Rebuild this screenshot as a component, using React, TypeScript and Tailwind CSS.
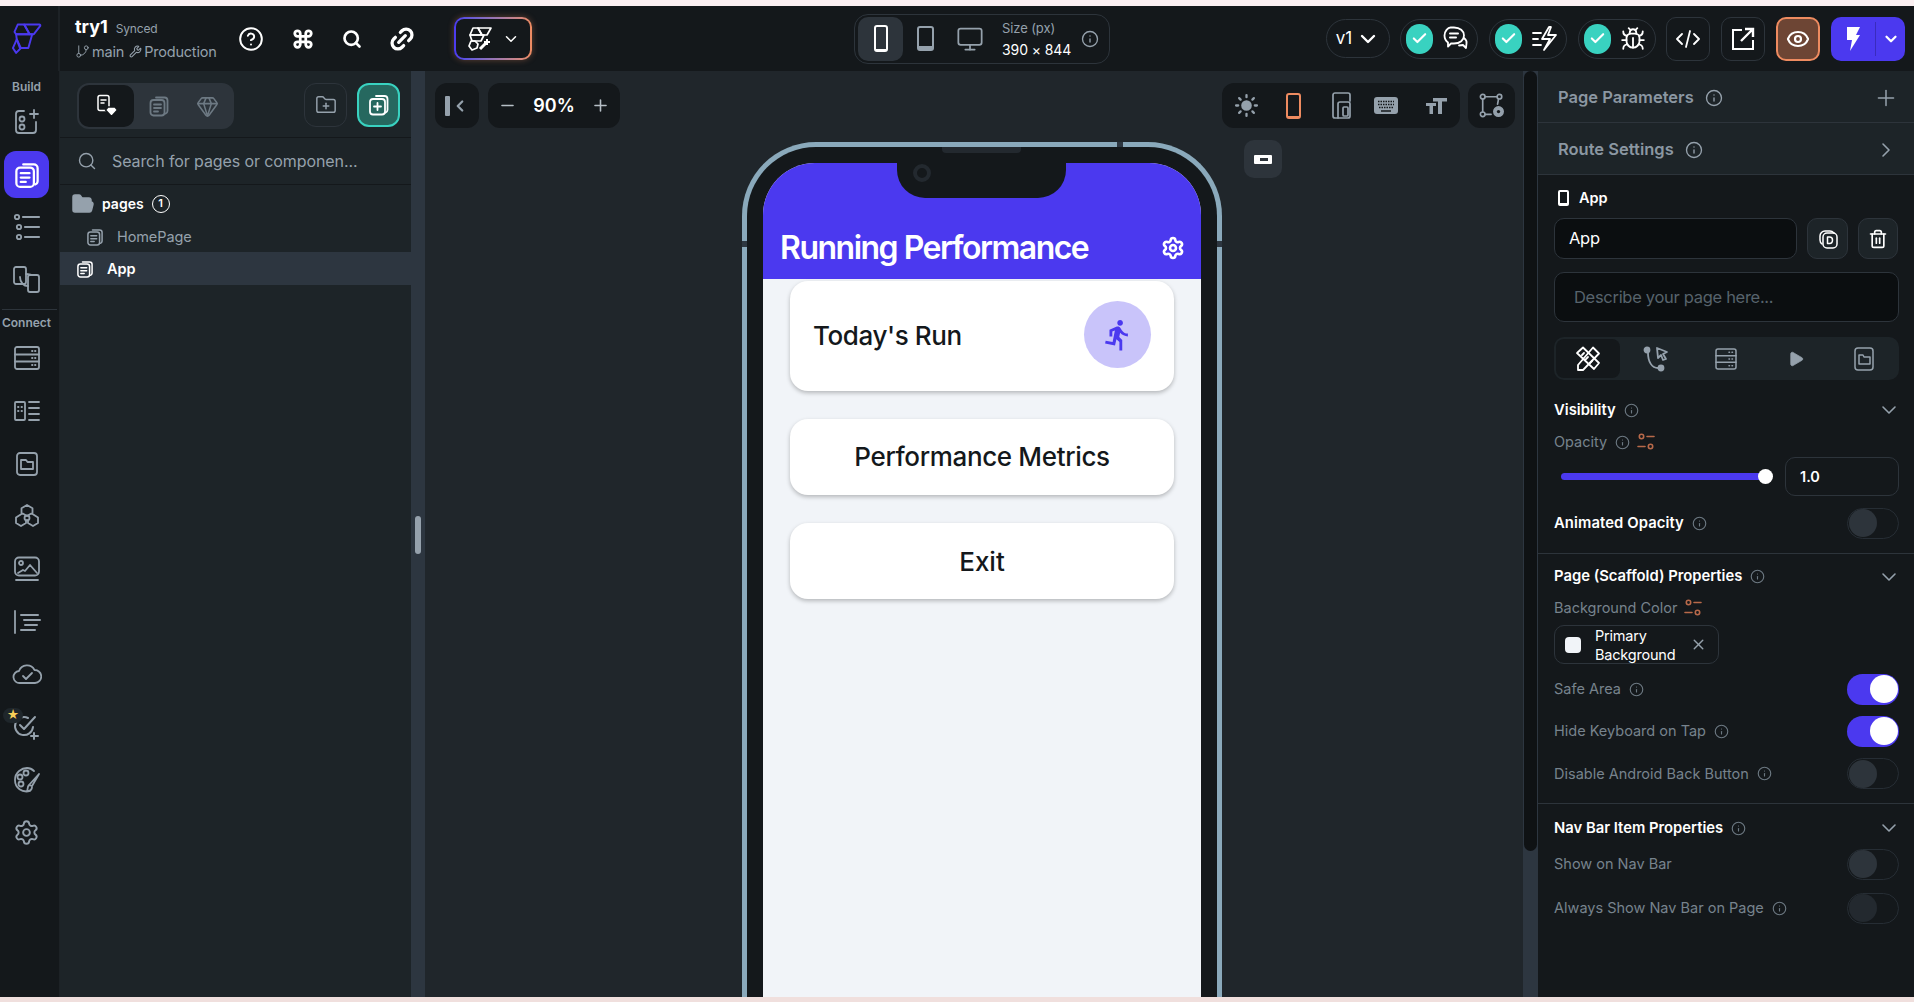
import React from "react";
import {
  CircleHelp, Command, Search, Link2, ChevronDown, ChevronRight, Info, Check, Eye, Bug, Minus, Plus, X,
  Settings, Trash2, Play, FolderPlus, Gem, Monitor, GitBranch, Wrench, FolderOpen, Sun,
} from "lucide-react";

const S = { fill: "none", stroke: "currentColor", strokeWidth: 1.8, strokeLinecap: "round" as const, strokeLinejoin: "round" as const };

function Pages({ size = 24 }: { size?: number }) {
  return (
    <svg width={size} height={size} viewBox="0 0 24 24" {...S}>
      <path d="M9 3.500h8.500a3 3 0 0 1 3 3V17a3 3 0 0 1-2 2.600" />
      <rect x="3.500" y="6" width="14" height="15.500" rx="3" />
      <path d="M7 10.500h7M7 14h7M7 17.500h4" />
    </svg>
  );
}
function Logo() {
  return (
    <svg width="60" height="60" viewBox="0 0 180 180" fill="none" stroke="#4b39ef" strokeWidth="6" strokeLinejoin="round">
      <path d="M75 42H122a3 3 0 0 1 3 4L105 72H92z" />
      <path d="M55 42H75L92 72H50L45 65z" />
      <path d="M50 72H100L88 115H62L52 88z" />
      <path d="M52 88L40 115 50 130 65 115z" />
    </svg>
  );
}
function MagicLogo() {
  return (
    <svg width="26" height="26" viewBox="0 0 26 26" fill="none" stroke="#fff" strokeWidth="1.700" strokeLinejoin="round">
      <path d="M11 2h13l-4 7h-5z" />
      <path d="M6 2h5l4 7H3z" />
      <path d="M3 9h14l-3 6H5z" />
      <path d="M4 15l-2 5 3 4 5-2 1-4-3-3z" />
      <path d="M13 23l7-7" strokeWidth="3" />
      <path d="M20 13v6M17 16h6" strokeWidth="2" />
    </svg>
  );
}
function Toggle({ on, dim }: { on?: boolean; dim?: boolean }) {
  if (on)
    return (
      <div className="w-[52px] h-[31px] rounded-full bg-[#4b39ef] flex justify-end items-center pr-[1px]">
        <div className="w-[28px] h-[28px] rounded-full bg-white" />
      </div>
    );
  return (
    <div className="w-[52px] h-[31px] rounded-full border border-[#262d34] flex items-center pl-[1px]">
      <div className={dim ? "w-[28px] h-[28px] rounded-full bg-[#23292f]" : "w-[28px] h-[28px] rounded-full bg-[#2d343b]"} />
    </div>
  );
}
function Tune() {
  return (
    <svg width="18" height="18" viewBox="0 0 18 18" fill="none" stroke="#b8694a" strokeWidth="1.600" strokeLinecap="round">
      <circle cx="4.500" cy="3.500" r="2.200" />
      <path d="M10 3.500h7M1 13.500h7" />
      <circle cx="13.500" cy="13.500" r="2.200" />
    </svg>
  );
}
function Dot() {
  return <Info size={15} strokeWidth={1.8} className="text-[#6d7983]" />;
}
function CheckPill({ children }: { children: React.ReactNode }) {
  return (
    <div className="w-[78px] h-[40px] rounded-full border border-[#2d343b] flex items-center pl-[5px] gap-[9px]">
      <div className="w-[27px] h-[30px] rounded-full bg-[#39d2c0] flex items-center justify-center text-white">
        <Check size={17} strokeWidth={3} />
      </div>
      <div className="text-white">{children}</div>
    </div>
  );
}
function RailIcon({ children, star }: { children: React.ReactNode; star?: boolean }) {
  return (
    <div className="relative h-[52.7px] flex items-center justify-center text-[#95a1ac] shrink-0">
      {children}
      {star && (
        <div className="absolute left-[3px] top-[7px] w-[20px] h-[15px] rounded-full bg-[#1f262b] flex items-center justify-center text-[12px] leading-none text-[#f9cf58]">
          ★
        </div>
      )}
    </div>
  );
}
function PanelRow({ label, info, className, tune }: { label: string; info?: boolean; className?: string; tune?: boolean }) {
  return (
    <div className={`flex items-center ${className ?? ""}`}>
      <span className="text-[14.5px] text-[#77838d]">{label}</span>
      {info && <span className="ml-[8px]"><Dot /></span>}
      {tune && <span className="ml-[7px]"><Tune /></span>}
    </div>
  );
}
function ToggleRow({ label, info, on, dim, h = "h-[42px]", extra }: { label: string; info?: boolean; on?: boolean; dim?: boolean; h?: string; extra?: string }) {
  return (
    <div className={`flex items-center justify-between ${h} ${extra ?? ""}`}>
      <PanelRow label={label} info={info} />
      <Toggle on={on} dim={dim} />
    </div>
  );
}
function SectionHead({ label, h }: { label: string; h: string }) {
  return (
    <div className={`flex items-center justify-between ${h}`}>
      <div className="flex items-center gap-[8px]">
        <span className="text-[14.800px] font-semibold text-white">{label}</span>
        <Dot />
      </div>
      <ChevronDown size={24} strokeWidth={1.6} className="text-[#95a1ac] -mr-[2px]" />
    </div>
  );
}

function Rail() {
  return (
    <div className="w-[60px] shrink-0 bg-[#14181b] flex flex-col items-stretch pr-[6px] border-r border-[#1d2226]">
      <div className="h-[29px] pt-[2px] flex items-center justify-center text-[12px] font-semibold text-[#95a1ac]">Build</div>
      <div className="h-[44px] flex items-center justify-center text-[#95a1ac]">
        <svg width="30" height="30" viewBox="0 0 30 30" {...S}>
          <path d="M12 4H7a3 3 0 0 0-3 3v16a3 3 0 0 0 3 3h14a3 3 0 0 0 3-3v-8" />
          <circle cx="10" cy="12" r="2.500" />
          <circle cx="10" cy="20" r="2.500" />
          <path d="M22 3v8M18 7h8" />
        </svg>
      </div>
      <div className="mt-[7px] mx-[4px] h-[47px] rounded-[12px] bg-[#4b39ef] flex items-center justify-center text-white">
        <Pages size={30} />
      </div>
      <div className="mt-[3px] h-[52px] flex items-center justify-center text-[#95a1ac]">
        <svg width="30" height="30" viewBox="0 0 30 30" {...S}>
          <circle cx="5" cy="5" r="2.200" /><circle cx="7" cy="15" r="2.200" /><circle cx="7" cy="25" r="2.200" />
          <path d="M11 5h16M13 15h14M13 25h14" strokeWidth="2.200" />
        </svg>
      </div>
      <div className="h-[52px] flex items-center justify-center text-[#95a1ac]">
        <svg width="30" height="30" viewBox="0 0 30 30" {...S}>
          <rect x="2" y="3" width="12" height="17" rx="2" />
          <rect x="16" y="11" width="11" height="17" rx="2" />
          <path d="M8 13c0 6 4 9 8 9M14 10c3 0 5 1 6 1" />
        </svg>
      </div>
      <div className="mt-[4px] border-t border-[#2d343b] mr-[-4px] ml-[2px]" />
      <div className="h-[22px] pt-[4px] flex items-center justify-center text-[12px] font-semibold text-[#95a1ac]">Connect</div>
      <RailIcon>
        <svg width="28" height="26" viewBox="0 0 28 26" {...S}>
          <rect x="2" y="2" width="24" height="22" rx="2" />
          <path d="M2 9.500h24M2 16.500h24M19 6h.5M22 6h.5M19 13h.5M22 13h.5M19 20h.5M22 20h.5" />
        </svg>
      </RailIcon>
      <RailIcon>
        <svg width="28" height="24" viewBox="0 0 28 24" {...S}>
          <rect x="2" y="3" width="10" height="18" rx="1" />
          <path d="M5 8h.5M8.500 8h.5M5 12h.5M8.500 12h.5M16 3h10M16 9h10M16 15h10M16 21h10" />
        </svg>
      </RailIcon>
      <RailIcon>
        <svg width="24" height="26" viewBox="0 0 24 26" {...S}>
          <rect x="2" y="2" width="20" height="22" rx="3" />
          <path d="M6 9h5l1.500 2H18v7H6z" />
        </svg>
      </RailIcon>
      <RailIcon>
        <svg width="28" height="26" viewBox="0 0 28 26" {...S}>
          <path d="M14 2l5.500 3.200v4.600L14 13l-5.500-3.200V5.200zM8.500 11L3 14.500v5.500l5 3 5-3v-3M19.500 11l5.500 3.500v5.500l-5 3-5-3v-3" />
          <circle cx="14" cy="15" r="2.500" />
        </svg>
      </RailIcon>
      <RailIcon>
        <svg width="28" height="26" viewBox="0 0 28 26" {...S}>
          <rect x="2" y="1.500" width="24" height="18" rx="4" />
          <circle cx="8" cy="7" r="2" />
          <path d="M5 17l5-3 2 1 5-6 7 8M3 24h22" />
        </svg>
      </RailIcon>
      <RailIcon>
        <svg width="28" height="24" viewBox="0 0 28 24" {...S}>
          <path d="M2 1v22" />
          <path d="M8 5h17M11 10h16M12 15h12M8 20h14" strokeWidth="2" />
        </svg>
      </RailIcon>
      <RailIcon>
        <svg width="30" height="22" viewBox="0 0 30 22" {...S}>
          <path d="M8 20a6 6 0 0 1-1-12 8.500 8.500 0 0 1 15.500-1A6.500 6.500 0 0 1 23 20z" />
          <path d="M11 13l3 3 6-6" />
        </svg>
      </RailIcon>
      <RailIcon star>
        <svg width="28" height="26" viewBox="0 0 28 26" {...S} strokeWidth="2">
          <path d="M20 13a9 9 0 1 1-5-9" />
          <path d="M7 11l4 4 11-12M21 19v6M18 22h7" />
        </svg>
      </RailIcon>
      <RailIcon>
        <svg width="28" height="28" viewBox="0 0 28 28" {...S}>
          <path d="M17 25c-8 2-15-3-15-11S9 2 14 2c4 0 6 2 7 3" />
          <circle cx="13" cy="7" r="2.500" /><circle cx="7" cy="11" r="2.500" /><circle cx="8" cy="18" r="2.500" />
          <path d="M26 8L19 20l-3-1zM16 19c-2 2-1 5-2 6 3 0 5-1 5-4" />
        </svg>
      </RailIcon>
      <RailIcon><Settings size={27} strokeWidth={1.7} /></RailIcon>
    </div>
  );
}

function TopBar() {
  return (
    <div className="h-[65px] shrink-0 bg-[#14181b] flex items-center relative">
      <div className="w-[60px] h-full flex items-center justify-center border-r-2 border-[#1d2226] pt-[3px]">
        <Logo />
      </div>
      <div className="ml-[15px] w-[149px] flex flex-col">
        <div className="flex items-baseline gap-[8px] leading-[20px]">
          <span className="text-[18px] font-bold text-white">try1</span>
          <span className="text-[12px] text-[#95a1ac] tracking-[-0.2px]">Synced</span>
        </div>
        <div className="flex items-center mt-[4px] text-[14.500px] text-[#95a1ac] leading-[18px] tracking-[-0.2px]">
          <GitBranch size={15} strokeWidth={1.5} className="mr-[2px]" />
          <span>main</span>
          <Wrench size={13} strokeWidth={2} className="ml-[5px] mr-[2px]" />
          <span>Production</span>
        </div>
      </div>
      <div className="ml-[14px] flex items-center text-white">
        <CircleHelp size={26} strokeWidth={1.8} />
        <Command size={22} strokeWidth={3} className="ml-[28px]" />
        <Search size={20} strokeWidth={3.2} className="ml-[28px]" />
        <Link2 size={28} strokeWidth={2.8} className="ml-[26px] -rotate-45" />
      </div>
      <div className="ml-[38px] w-[78px] h-[43px] rounded-[10px] p-[2px] bg-gradient-to-r from-[#4b39ef] to-[#ee8b60] shadow-[0_0_6px_rgba(238,139,96,0.35)]">
        <div className="w-full h-full rounded-[8px] bg-[#14181b] flex items-center justify-center gap-[9px] text-white">
          <MagicLogo />
          <ChevronDown size={18} strokeWidth={2} />
        </div>
      </div>
      <div className="ml-[322px] w-[256px] h-[50px] rounded-[14px] border border-[#2d343b] flex items-center pl-[3px]">
        <div className="w-[45px] h-[44px] rounded-[10px] bg-[#2d343b] flex items-center justify-center">
          <div className="w-[14px] h-[27px] rounded-[3px] border-2 border-white border-b-[3px]" />
        </div>
        <div className="ml-[14px] w-[17px] h-[25px] rounded-[3px] border-2 border-[#95a1ac] border-b-[5px]" />
        <Monitor size={28} strokeWidth={1.5} className="ml-[22px] text-[#95a1ac]" />
        <div className="ml-[18px] flex flex-col leading-[18px]">
          <span className="text-[13px] text-[#95a1ac] tracking-[-0.1px]">Size (px)</span>
          <span className="text-[14px] text-white mt-[4px] tracking-[-0.1px]">390 × 844</span>
        </div>
        <Info size={18} strokeWidth={1.8} className="ml-[10px] text-[#95a1ac]" />
      </div>
      <div className="ml-[216px] w-[64px] h-[39px] rounded-full border border-[#2d343b] flex items-center justify-center gap-[4px] text-white text-[17px]">
        v1
        <ChevronDown size={24} strokeWidth={2.4} />
      </div>
      <div className="ml-[10px]">
        <CheckPill>
          <svg width="27" height="27" viewBox="0 0 27 27" {...S}>
            <path d="M12 2.500c6 0 10 3.500 10 8s-4 8-10 8l-3 0-3 3v-4c-2-1.500-3.500-4-3.500-7 0-4.500 3.500-8 6-8z" />
            <path d="M8 8.500h8M8 12.500h6" strokeWidth="2" />
            <path d="M22 13c2 1.500 3 3 2.500 5.500l-.5 4.500-3-3-4 .5" />
          </svg>
        </CheckPill>
      </div>
      <div className="ml-[11px]">
        <CheckPill>
          <svg width="27" height="27" viewBox="0 0 27 27" {...S}>
            <path d="M18 2L11 14h8l-6 11 12-15h-8l3-8z" />
            <path d="M2 8h8M2 14h5M2 20h8" />
          </svg>
        </CheckPill>
      </div>
      <div className="ml-[11px]">
        <CheckPill><Bug size={26} strokeWidth={1.7} /></CheckPill>
      </div>
      <div className="ml-[10px] w-[44px] h-[44px] rounded-[10px] border border-[#2d343b] flex items-center justify-center text-white">
        <svg width="24" height="20" viewBox="0 0 24 20" {...S}><path d="M6 5l-5 5 5 5M18 5l5 5-5 5M14 2l-4 16" /></svg>
      </div>
      <div className="ml-[11px] w-[44px] h-[44px] rounded-[10px] border border-[#2d343b] flex items-center justify-center text-white">
        <svg width="24" height="24" viewBox="0 0 24 24" fill="none" stroke="currentColor" strokeWidth="2"><path d="M11 3H2v19h20v-9" /><path d="M10 14L21 3M14 2h8v8" strokeWidth="2.400" /></svg>
      </div>
      <div className="ml-[11px] w-[44px] h-[44px] rounded-[10px] border-2 border-[#ee8b60] bg-[#6d4534] flex items-center justify-center text-white">
        <Eye size={24} strokeWidth={2.2} />
      </div>
      <div className="ml-[11px] w-[74px] h-[44px] rounded-[10px] bg-[#4b39ef] flex items-center text-white">
        <div className="w-[44px] flex justify-center">
          <svg width="16" height="24" viewBox="0 0 16 24" fill="#fff"><path d="M2 0h13l-4 8h4L5 24l2-11H2z" /></svg>
        </div>
        <div className="w-px h-[34px] bg-[#3a2bbd]" />
        <div className="flex-1 flex justify-center"><ChevronDown size={18} strokeWidth={3} /></div>
      </div>
    </div>
  );
}

function LeftPanel() {
  return (
    <div className="w-[351px] shrink-0 bg-[#1d2428] flex flex-col">
      <div className="h-[67px] border-b border-[#14181b] flex pl-[17px] pt-[12px] items-start">
        <div className="w-[157px] h-[46px] rounded-[12px] bg-[#2d343b] flex items-center p-[2px]">
          <div className="w-[55px] h-[42px] rounded-[10px] bg-[#14181b] flex items-center justify-center text-white relative">
            <svg width="24" height="24" viewBox="0 0 24 24" {...S} strokeWidth="1.500">
              <rect x="3" y="1.500" width="11" height="15" rx="2" />
              <path d="M6 6h5M6 9h3" />
              <path d="M13 13h7l2.500 3-6 6.500-6-6.500z" fill="#fff" stroke="#14181b" />
            </svg>
          </div>
          <div className="w-[50px] flex justify-center text-[#6d7983]"><Pages size={24} /></div>
          <div className="w-[46px] flex justify-center text-[#6d7983]"><Gem size={23} strokeWidth={1.6} /></div>
        </div>
        <div className="ml-[70px] w-[43px] h-[44px] rounded-[12px] border border-[#2d343b] flex items-center justify-center text-[#95a1ac]">
          <FolderPlus size={22} strokeWidth={1.6} />
        </div>
        <div className="ml-[10px] w-[43px] h-[44px] rounded-[12px] border-2 border-[#39d2c0] bg-[#26685f] flex items-center justify-center text-white">
          <svg width="24" height="24" viewBox="0 0 24 24" {...S}>
            <path d="M9 3h8.500a3 3 0 0 1 3 3v11a3 3 0 0 1-2 2.600" />
            <rect x="3" y="6" width="15" height="15.500" rx="3" />
            <path d="M10.500 10v7M7 13.500h7" />
          </svg>
        </div>
      </div>
      <div className="h-[47px] border-b border-[#14181b] flex items-center pl-[17px] text-[#95a1ac]">
        <Search size={20} strokeWidth={1.7} />
        <span className="ml-[15px] text-[16px] tracking-[-0.1px]">Search for pages or componen...</span>
      </div>
      <div className="h-[37px] flex items-center pl-[11px]">
        <FolderOpen size={24} strokeWidth={1.5} fill="#95a1ac" className="text-[#95a1ac]" />
        <span className="ml-[7px] text-[14px] font-semibold text-white">pages</span>
        <div className="ml-[8px] w-[18px] h-[18px] rounded-full border border-white flex items-center justify-center text-[11px] font-semibold text-white">1</div>
      </div>
      <div className="h-[29px] flex items-center pl-[25px] text-[#95a1ac]">
        <Pages size={20} />
        <span className="ml-[12px] text-[14.500px] tracking-[-0.1px]">HomePage</span>
      </div>
      <div className="mt-px h-[33px] bg-[#2d3640] flex items-center pl-[15px] text-white">
        <Pages size={20} />
        <span className="ml-[12px] text-[14.500px] font-semibold">App</span>
      </div>
    </div>
  );
}

function Card({ children, h, mt }: { children: React.ReactNode; h: string; mt: string }) {
  return (
    <div className={`mx-[27px] bg-white rounded-[18px] shadow-[0_2px_4px_rgba(0,0,0,0.25)] flex items-center ${h} ${mt}`}>
      {children}
    </div>
  );
}

function Canvas() {
  return (
    <div className="flex-1 bg-[#20262b] relative overflow-hidden pt-[71px] pl-[317px]">
      <div className="absolute left-[10px] top-[12px] w-[44px] h-[45px] rounded-[12px] bg-[#14181b] flex items-center justify-center text-[#95a1ac]">
        <div className="w-[5px] h-[20px] rounded-[1px] bg-[#95a1ac]" />
        <ChevronRight size={18} strokeWidth={3} className="rotate-180 ml-[1px]" />
      </div>
      <div className="absolute left-[63px] top-[12px] w-[132px] h-[45px] rounded-[12px] bg-[#14181b] flex items-center justify-between px-[10px] text-[#b6bfc6]">
        <Minus size={19} strokeWidth={2} />
        <span className="text-[18px] font-semibold text-white">90%</span>
        <Plus size={19} strokeWidth={2} />
      </div>
      <div className="absolute left-[797px] top-[12px] w-[238px] h-[45px] rounded-[12px] bg-[#14181b] flex items-center text-[#95a1ac]">
        <div className="ml-[12px] w-[25px] shrink-0 flex justify-center"><Sun size={25} strokeWidth={2.2} fill="currentColor" /></div>
        <div className="ml-[27px] w-[15px] h-[26px] shrink-0 rounded-[3px] border-2 border-[#ee8b60] border-b-[3px]" />
        <svg width="19" height="27" viewBox="0 0 19 27" {...S} strokeWidth="1.700" className="ml-[31px] shrink-0">
          <path d="M18 9V3a2 2 0 0 0-2-2H3a2 2 0 0 0-2 2v21a2 2 0 0 0 2 2h3" />
          <path d="M6 26V12a2 2 0 0 1 2-2h8a2 2 0 0 1 2 2v12a2 2 0 0 1-2 2z" />
          <rect x="11" y="15" width="5" height="9" rx="1" />
        </svg>
        <svg width="24" height="17" viewBox="0 0 24 17" className="ml-[23px] shrink-0" fill="none">
          <rect width="24" height="17" rx="3" fill="currentColor" />
          <path d="M4 4.500h16M4 7.500h16M5 10.500h14" stroke="#14181b" strokeWidth="1.300" strokeDasharray="1.500 1" />
          <path d="M7 14h10" stroke="#14181b" strokeWidth="1.500" />
        </svg>
        <svg width="21" height="16" viewBox="0 0 21 16" className="ml-[28px] shrink-0" fill="currentColor">
          <path d="M7 0h14v3.500h-5V16h-4V3.500H7zM0 5h10v3H7v8H3.500V8H0z" />
        </svg>
      </div>
      <div className="absolute left-[1043px] top-[12px] w-[47px] h-[45px] rounded-[12px] bg-[#14181b] flex items-center justify-center text-[#95a1ac]">
        <svg width="26" height="26" viewBox="0 0 28 28" {...S}>
          <circle cx="4" cy="4" r="2.500" /><circle cx="22" cy="4" r="2.500" /><circle cx="4" cy="23" r="2.500" />
          <path d="M6.500 4H19.500M4 6.500V20.500M6.500 23H13M21 6.500L20 12" />
          <circle cx="21" cy="20" r="5" fill="currentColor" />
          <circle cx="21" cy="20" r="1.800" fill="#14181b" stroke="none" />
        </svg>
      </div>
      <div className="absolute left-[819px] top-[69px] w-[38px] h-[38px] rounded-[10px] bg-[#2d343b] flex items-center justify-center">
        <div className="w-[18px] h-[9px] rounded-[1px] bg-white flex items-center pl-[6px]"><div className="w-[8px] h-[3px] bg-[#2d343b]" /></div>
      </div>

      <div className="relative w-[480px] h-[900px] rounded-t-[74px] border-t-[5px] border-x-[5px] border-[#8aa9bb] bg-[#14181b] pt-[16px] px-[16px]">
        <div className="absolute left-[-5px] top-[94px] w-[5px] h-[6px] bg-[#2d3640]" />
        <div className="absolute right-[-5px] top-[94px] w-[5px] h-[6px] bg-[#2d3640]" />
        <div className="absolute right-[94px] top-[-5px] w-[6px] h-[5px] bg-[#2d3640]" />
        <div className="absolute left-[195px] top-0 w-[79px] h-[6px] rounded-b-[4px] bg-[#23292f]" />
        <div className="h-full rounded-t-[52px] bg-[#f1f4f8] overflow-hidden font-['Inter',sans-serif] relative">
          <div className="absolute left-[134px] top-0 w-[169px] h-[35px] bg-[#14181b] rounded-b-[28px]" />
          <div className="absolute left-[150px] top-[1px] w-[18px] h-[18px] rounded-full border-[4px] border-[#23292f] bg-[#14181b]" />
          <div className="h-[116px] bg-[#4b39ef] flex items-end justify-between pl-[17px] pr-[16px] pb-[12px]">
            <span className="text-[32px] leading-[38px] font-semibold text-white tracking-[-1.500px]">Running Performance</span>
            <Settings size={24} strokeWidth={2.6} className="text-white mb-[7px]" />
          </div>
          <Card h="h-[110px]" mt="mt-[2px]">
            <span className="ml-[23px] mb-[2px] text-[26px] font-medium text-[#14181b] tracking-[-0.400px]">Today's Run</span>
            <div className="ml-auto mr-[23px] -mt-[3px] w-[67px] h-[67px] rounded-full bg-[#c9c4fa] flex items-center justify-center">
              <svg width="34" height="34" viewBox="0 0 24 24" fill="#4b39ef">
                <path d="M13.49 5.48c1.100 0 2-.9 2-2s-.9-2-2-2-2 .9-2 2 .9 2 2 2zm-3.600 13.900l1-4.400 2.100 2v6h2v-7.500l-2.100-2 .6-3c1.300 1.500 3.300 2.500 5.500 2.500v-2c-1.900 0-3.500-1-4.300-2.400l-1-1.600c-.4-.6-1-1-1.700-1-.3 0-.5.1-.8.1l-5.200 2.200v4.700h2v-3.400l1.800-.7-1.600 8.100-4.900-1-.4 2 7 1.400z" />
              </svg>
            </div>
          </Card>
          <Card h="h-[76px] justify-center" mt="mt-[28px]">
            <span className="mb-[2px] text-[26px] font-medium text-[#14181b] tracking-[-0.350px]">Performance Metrics</span>
          </Card>
          <Card h="h-[76px] justify-center" mt="mt-[28px]">
            <span className="text-[26px] font-medium text-[#14181b]">Exit</span>
          </Card>
        </div>
      </div>
    </div>
  );
}

function RightPanel() {
  return (
    <div className="w-[376px] shrink-0 bg-[#14181b] flex flex-col">
      <div className="h-[52px] pt-[2px] bg-[#1d2428] border-b border-[#2d343b] flex items-center pl-[20px] pr-[15px]">
        <span className="text-[16.500px] font-semibold text-[#8b97a2]">Page Parameters</span>
        <Info size={18} strokeWidth={1.8} className="ml-[11px] text-[#95a1ac]" />
        <Plus size={26} strokeWidth={1.4} className="ml-auto text-[#95a1ac]" />
      </div>
      <div className="h-[52px] pt-[2px] bg-[#1d2428] border-b border-[#2d343b] flex items-center pl-[20px] pr-[15px]">
        <span className="text-[16.500px] font-semibold text-[#8b97a2]">Route Settings</span>
        <Info size={18} strokeWidth={1.8} className="ml-[11px] text-[#95a1ac]" />
        <ChevronRight size={24} strokeWidth={1.6} className="ml-auto text-[#95a1ac] mr-[1px]" />
      </div>
      <div className="pl-[16px] pr-[15px] flex flex-col">
        <div className="h-[43px] pt-[2px] flex items-center text-white">
          <div className="ml-[4px] w-[11px] h-[16px] rounded-[2px] border-2 border-white border-b-[3px]" />
          <span className="ml-[10px] text-[14.500px] font-semibold">App</span>
        </div>
        <div className="flex h-[41px]">
          <div className="w-[243px] rounded-[10px] border border-[#2d343b] bg-[#0b0e10] flex items-center pl-[14px] text-[16.500px] text-white tracking-[-0.3px]">App</div>
          <div className="ml-[10px] w-[41px] rounded-[10px] border border-[#2d343b] bg-[#1d2428] flex items-center justify-center text-white">
            <svg width="20" height="20" viewBox="0 0 20 20" {...S} strokeWidth="1.500">
              <path d="M4 15a5 5 0 0 1-2-4V7a5 5 0 0 1 5-5h5c2 0 3 1 4 2" />
              <rect x="5" y="4" width="14" height="15" rx="4" />
              <path d="M9.500 8h2c2 0 3 1 3 3s-1 3.500-3 3.500h-2z" />
            </svg>
          </div>
          <div className="ml-[10px] w-[40px] rounded-[10px] border border-[#2d343b] bg-[#1d2428] flex items-center justify-center text-white">
            <Trash2 size={20} strokeWidth={2} />
          </div>
        </div>
        <div className="mt-[13px] h-[50px] rounded-[10px] border border-[#2d343b] bg-[#0b0e10] flex items-center pl-[19px] text-[16.500px] text-[#57636c] tracking-[-0.3px]">
          Describe your page here...
        </div>
        <div className="mt-[15px] h-[43px] rounded-[10px] bg-[#1d2428] flex items-center p-[2px] text-[#95a1ac]">
          <div className="w-[64px] h-[39px] rounded-[8px] bg-[#14181b] flex items-center justify-center text-white">
            <svg width="26" height="26" viewBox="0 0 26 26" {...S} strokeWidth="1.800">
              <path d="M8 1.500L24 17l-5 6L2 7zM9 7l-2 2M13 11l-2 2M17 15l-2 2" />
              <path d="M18 1.500l6 6L8 24H3v-5z" />
            </svg>
          </div>
          <div className="w-[72px] flex justify-center">
            <svg width="26" height="26" viewBox="0 0 26 26" {...S}>
              <circle cx="4" cy="4" r="2.500" fill="currentColor" />
              <circle cx="18" cy="22" r="2.500" fill="currentColor" />
              <path d="M5 7c0 9 4 15 10 15" />
              <path d="M14 2l10 4-4 2 3 5-3 1-2-5-3 3z" />
            </svg>
          </div>
          <div className="w-[68px] flex justify-center">
            <svg width="24" height="24" viewBox="0 0 24 24" {...S} strokeWidth="1.500">
              <rect x="2" y="2" width="20" height="20" rx="2" />
              <path d="M2 8.700h20M2 15.300h20M15 5.300h.5M18 5.300h.5M15 12h.5M18 12h.5M15 18.700h.5M18 18.700h.5" />
            </svg>
          </div>
          <div className="w-[72px] flex justify-center"><Play size={18} fill="currentColor" strokeWidth={1} /></div>
          <div className="w-[64px] flex justify-center">
            <svg width="22" height="26" viewBox="0 0 22 26" {...S} strokeWidth="1.500">
              <rect x="2" y="2" width="18" height="22" rx="3" />
              <path d="M6 9h4l1 2h6v7H6z" />
            </svg>
          </div>
        </div>
        <SectionHead label="Visibility" h="h-[30px] mt-[15px]" />
        <PanelRow label="Opacity" info tune className="h-[30px] mt-[2px]" />
        <div className="h-[39px] flex items-center">
          <div className="ml-[7px] w-[205px] h-[7px] rounded-full bg-[#4b39ef] relative">
            <div className="absolute right-[-7px] top-[-4px] w-[15px] h-[15px] rounded-full bg-white" />
          </div>
          <div className="ml-[19px] w-[114px] h-[39px] rounded-[10px] border border-[#2d343b] flex items-center pl-[14px] text-[14.500px] font-semibold text-white">1.0</div>
        </div>
        <div className="flex items-center justify-between h-[32px] mt-[11px]">
          <div className="flex items-center gap-[8px]">
            <span className="text-[14.800px] font-semibold text-white tracking-[0.1px]">Animated Opacity</span>
            <Dot />
          </div>
          <Toggle />
        </div>
      </div>
      <div className="mt-[14px] border-t border-[#2d343b]" />
      <div className="pl-[16px] pr-[15px] flex flex-col">
        <SectionHead label="Page (Scaffold) Properties" h="h-[45px]" />
        <PanelRow label="Background Color" tune className="h-[18px]" />
        <div className="mt-[8px] w-[165px] h-[39px] rounded-[10px] border border-[#2d343b] flex items-center pl-[10px]">
          <div className="w-[16px] h-[16px] rounded-[4px] bg-[#f1f4f8]" />
          <div className="ml-[14px] w-[84px] text-[14.500px] leading-[19px] text-white tracking-[-0.2px]">Primary Background</div>
          <X size={17} strokeWidth={2} className="ml-[11px] text-[#95a1ac]" />
        </div>
        <ToggleRow label="Safe Area" info on extra="mt-[4px]" />
        <ToggleRow label="Hide Keyboard on Tap" info on />
        <ToggleRow label="Disable Android Back Button" info h="h-[43px]" />
      </div>
      <div className="mt-[8px] border-t border-[#2d343b]" />
      <div className="pl-[16px] pr-[15px] pt-[3px] flex flex-col">
        <SectionHead label="Nav Bar Item Properties" h="h-[42px]" />
        <ToggleRow label="Show on Nav Bar" h="h-[30px]" />
        <ToggleRow label="Always Show Nav Bar on Page" info dim h="h-[30px]" extra="mt-[14px]" />
      </div>
    </div>
  );
}

export default function App() {
  return (
    <div className="w-[1914px] h-[1002px] overflow-hidden flex flex-col bg-[#f0dfdd] font-['Inter',sans-serif]">
      <div className="h-[6px] shrink-0 bg-[#fbf0f2]" />
      <TopBar />
      <div className="h-[926px] shrink-0 flex items-stretch">
        <Rail />
        <LeftPanel />
        <div className="w-[14px] shrink-0 bg-[#2d3640] relative">
          <div className="absolute left-[4px] top-[445px] w-[6px] h-[38px] rounded-full bg-[#95a1ac]" />
        </div>
        <Canvas />
        <div className="w-[15px] shrink-0 bg-[#2d3640] relative">
          <div className="absolute left-[1px] top-0 w-[13px] h-[780px] rounded-full bg-[#0f1214]" />
        </div>
        <RightPanel />
      </div>
      <div className="h-[5px] shrink-0 bg-[#f0dfdd]" />
    </div>
  );
}
